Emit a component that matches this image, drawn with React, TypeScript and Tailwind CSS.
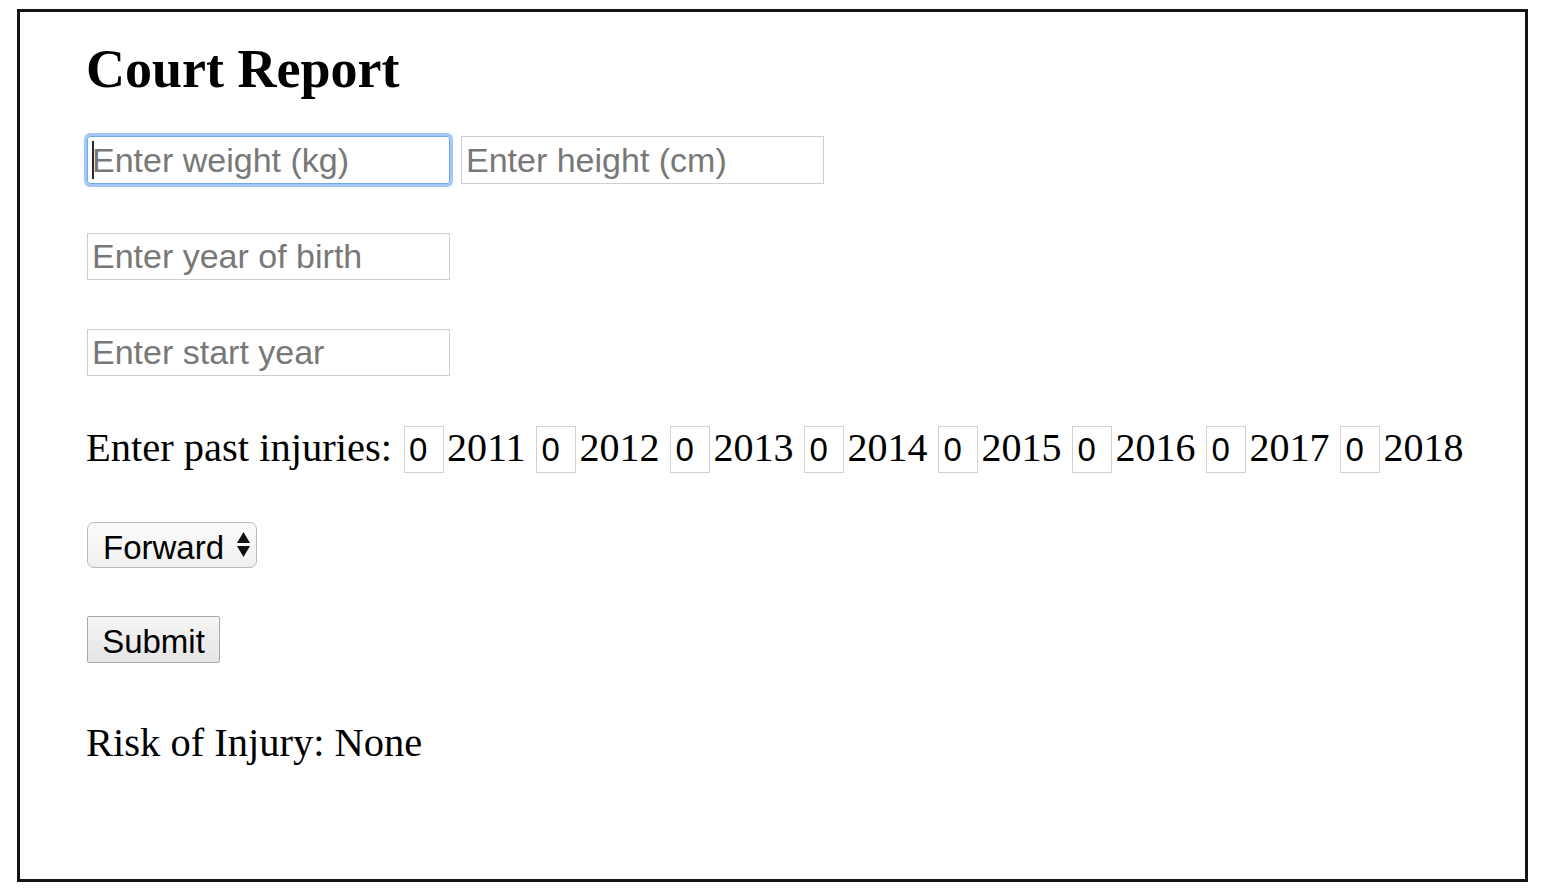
import React from "react";

const years = [2011, 2012, 2013, 2014, 2015, 2016, 2017, 2018];

const sans = "font-['Liberation_Sans',Arial,sans-serif]";

export default function App() {
  return (
    <div className="min-h-screen bg-white pl-[17px] pt-[9px]">
      <div className="w-[1511px] h-[873px] border-[3px] border-[#141414] pl-[67px] pt-[30px] flex flex-col items-start font-['Liberation_Serif','Times_New_Roman',serif] text-black">
        <h1 className="-ml-[1px] text-[54px] leading-none font-bold">Court Report</h1>

        {/* Weight + height */}
        <div className="mt-[40px] flex gap-[11px]">
          <div className="relative">
            <input
              type="text"
              placeholder="Enter weight (kg)"
              className={`${sans} block w-[363px] h-[48px] px-[4px] text-[34px] border border-[#6fa8f0] rounded-[3px] shadow-[0_0_0_3px_#a3c8f5] outline-none placeholder:text-[#787878]`}
            />
            {/* caret */}
            <span className="absolute left-[5px] top-[5px] h-[38px] w-[2px] bg-[#2a2a2a]" />
          </div>
          <input
            type="text"
            placeholder="Enter height (cm)"
            className={`${sans} block w-[363px] h-[48px] px-[4px] text-[34px] border border-[#cfcfcf] outline-none placeholder:text-[#787878]`}
          />
        </div>

        <input
          type="text"
          placeholder="Enter year of birth"
          className={`${sans} mt-[49px] block w-[363px] h-[47px] px-[4px] text-[34px] border border-[#cfcfcf] outline-none placeholder:text-[#787878]`}
        />

        <input
          type="text"
          placeholder="Enter start year"
          className={`${sans} mt-[49px] block w-[363px] h-[47px] px-[4px] text-[34px] border border-[#cfcfcf] outline-none placeholder:text-[#787878]`}
        />

        {/* Past injuries */}
        <div className="mt-[50px] flex items-baseline">
          <span className="-ml-[1px] text-[40.5px] leading-none mr-[12px]">Enter past injuries:</span>
          {years.map((year) => (
            <React.Fragment key={year}>
              <input
                type="text"
                defaultValue="0"
                className={`${sans} block w-[40px] h-[47px] pl-[4px] text-[33px] text-black border border-[#d2d2d2] outline-none`}
              />
              <span className="text-[40px] leading-none ml-[3px] mr-[11px]">{year}</span>
            </React.Fragment>
          ))}
        </div>

        {/* Position */}
        <div className="relative mt-[49px] w-[170px] h-[46px]">
          <select
            defaultValue="Forward"
            className={`${sans} appearance-none w-full h-full rounded-[7px] border border-[#b9b9b9] bg-gradient-to-b from-[#fbfbfb] to-[#f0f0f0] pl-[15px] pb-[6px] text-[33px] text-black outline-none`}
          >
            <option>Forward</option>
            <option>Guard</option>
            <option>Center</option>
          </select>
          <svg
            className="pointer-events-none absolute right-[7px] top-[10px]"
            width="13"
            height="25"
            viewBox="0 0 13 25"
          >
            <polygon points="6.5,0 13,11 0,11" fill="#111" />
            <polygon points="0,14 13,14 6.5,25" fill="#111" />
          </svg>
        </div>

        <button
          className={`${sans} mt-[48px] w-[133px] h-[47px] pb-[5px] border border-[#a8a8a8] rounded-[2px] bg-gradient-to-b from-[#f6f6f6] to-[#e4e4e4] text-[33px] text-black`}
        >
          Submit
        </button>

        <p className="-ml-[1px] mt-[60px] text-[40.5px] leading-none">Risk of Injury: None</p>
      </div>
    </div>
  );
}
